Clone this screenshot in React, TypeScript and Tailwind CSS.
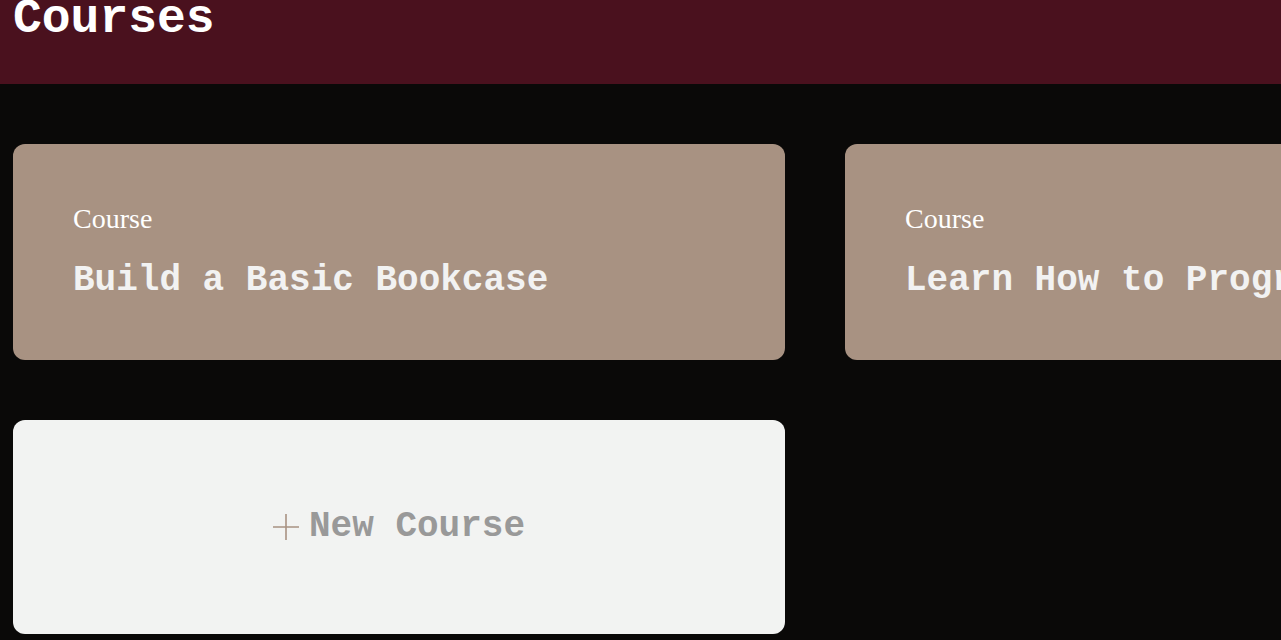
interface Course {
  label: string;
  title: string;
}

const courses: Course[] = [
  { label: 'Course', title: 'Build a Basic Bookcase' },
  { label: 'Course', title: 'Learn How to Program' },
];

const mono = "font-['Courier_New','Liberation_Mono',monospace]";

function CourseCard({ course }: { course: Course }) {
  return (
    <div className="h-[216px] rounded-xl bg-[#a89282] px-[60px] flex flex-col justify-center overflow-hidden">
      <p className="font-['Liberation_Serif','Times_New_Roman',serif] text-[28px] leading-[32px] text-white">
        {course.label}
      </p>
      <h2 className={`${mono} mt-[25px] text-[36px] font-bold leading-[41px] text-[#f2f2f2] whitespace-nowrap`}>
        {course.title}
      </h2>
    </div>
  );
}

function PlusIcon() {
  return (
    <svg width="26" height="26" viewBox="0 0 26 26" className="shrink-0">
      <path d="M13 0V26M0 13H26" stroke="#a89282" strokeWidth="1.6" fill="none" />
    </svg>
  );
}

export default function App() {
  return (
    <main className="h-screen w-full overflow-hidden bg-[#0a0908]">
      {/* Header */}
      <div className="h-[84px] bg-[#4a111e] px-[13px] flex items-start">
        <h1 className={`${mono} -mt-[17px] text-[48px] font-bold text-white`}>Courses</h1>
      </div>

      {/* Course grid */}
      <div className="grid grid-cols-[772px_772px] gap-[60px] px-[13px] pt-[60px]">
        {courses.map((course, index) => (
          <CourseCard key={index} course={course} />
        ))}
        <button className="h-[214px] rounded-xl bg-[#f2f3f2] flex items-center justify-center gap-[10px]">
          <PlusIcon />
          <span className={`${mono} text-[36px] font-bold text-[#999999]`}>New Course</span>
        </button>
      </div>
    </main>
  );
}
